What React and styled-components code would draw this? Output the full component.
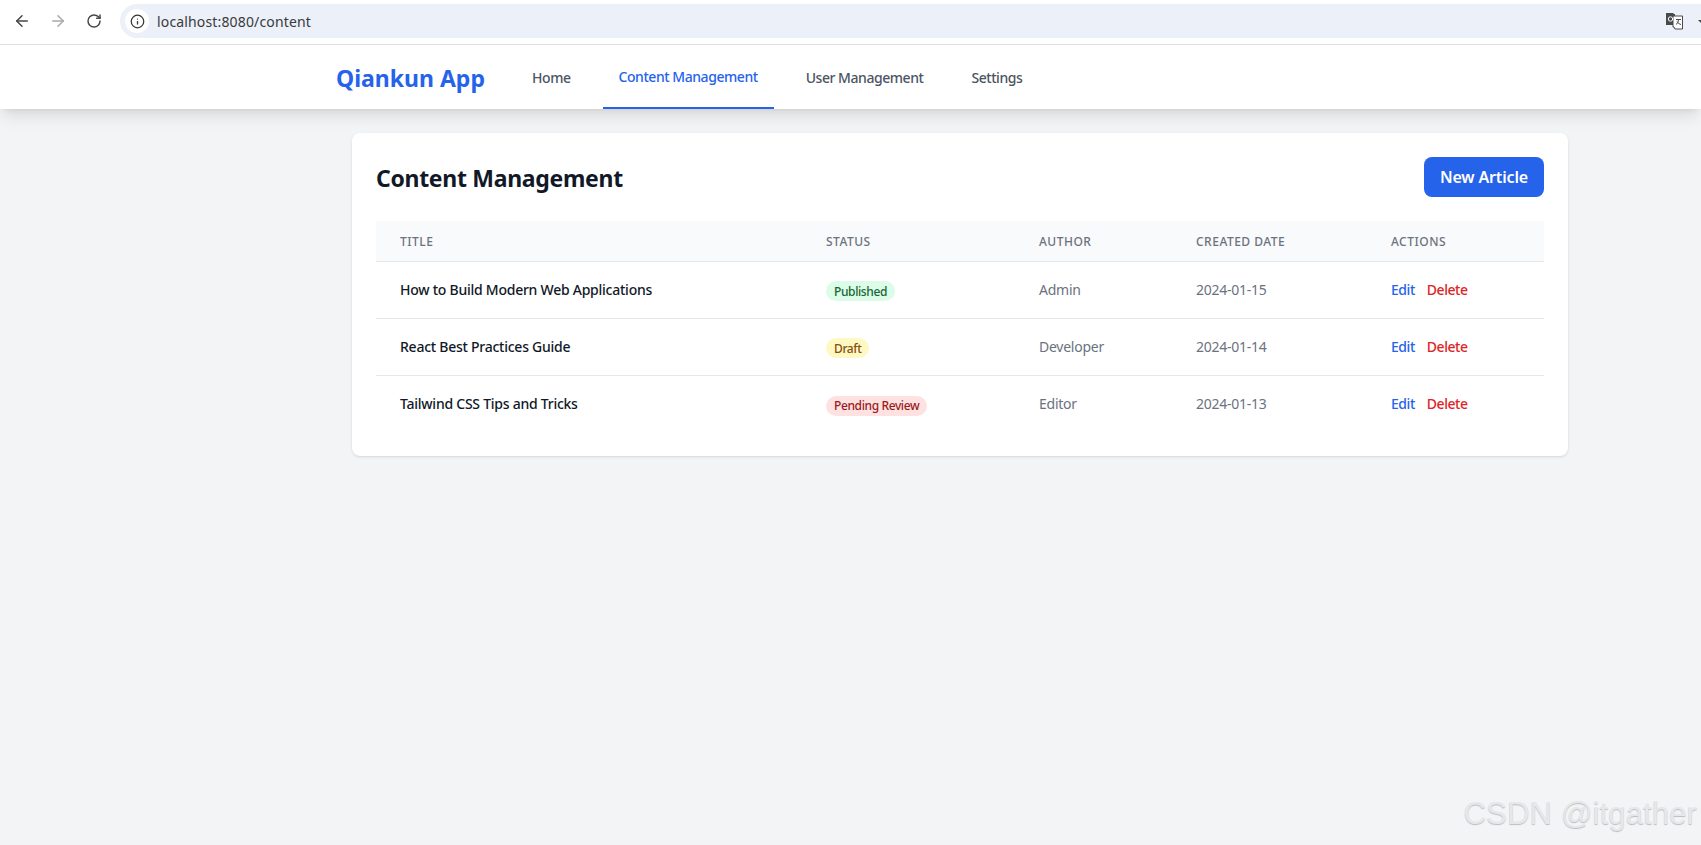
import React from 'react';
import styled, { createGlobalStyle } from 'styled-components';
import { ArrowLeft, ArrowRight, RotateCw, Info } from 'lucide-react';

const GlobalStyle = createGlobalStyle`
  html, body {
    margin: 0;
    padding: 0;
    height: 100%;
    background: #f3f4f6;
    font-family: "Noto Sans", "Open Sans", sans-serif;
    overflow: hidden;
  }
  * { box-sizing: border-box; }
`;

const Page = styled.div`
  position: relative;
  width: 1701px;
  height: 845px;
  overflow: hidden;
`;

// browser chrome
const BrowserBar = styled.div`
  height: 45px;
  background: #ffffff;
  border-bottom: 1px solid #e0e0e0;
  display: flex;
  align-items: center;
  padding: 0 0 2px 4px;
`;

const ChromeButton = styled.div`
  width: 36px;
  height: 36px;
  display: flex;
  align-items: center;
  justify-content: center;
  color: ${props => (props.$disabled ? '#a9a9a9' : '#474747')};
`;

const AddressBar = styled.div`
  flex: 1;
  height: 34px;
  margin-left: 8px;
  background: #ebf0f9;
  border-radius: 17px 0 0 17px;
  display: flex;
  align-items: center;
  padding-left: 5px;
`;

const SiteInfo = styled.div`
  width: 24px;
  height: 24px;
  border-radius: 50%;
  background: #ffffff;
  display: flex;
  align-items: center;
  justify-content: center;
  color: #333333;
`;

const Url = styled.span`
  margin-left: 8px;
  font-size: 14px;
  letter-spacing: 0.15px;
  color: #3a3a3a;
`;

const TranslateIcon = styled.svg`
  margin-left: auto;
  width: 17px;
  height: 18px;
`;

const Caret = styled.span`
  width: 0;
  height: 0;
  margin-right: -3px;
  margin-left: 15px;
  border-left: 3px solid transparent;
  border-right: 3px solid transparent;
  border-top: 3px solid #444444;
`;

// app nav
const Nav = styled.nav`
  position: relative;
  height: 64px;
  background: #ffffff;
  box-shadow: 0 10px 15px -3px rgba(0, 0, 0, 0.1), 0 4px 6px -4px rgba(0, 0, 0, 0.1);
  display: flex;
  align-items: stretch;
  padding-left: 336px;
`;

const Logo = styled.div`
  display: flex;
  align-items: center;
  width: 149px;
  font-size: 23px;
  font-weight: 700;
  color: #2563eb;
  margin-right: 31px;
  padding-top: 2px;
`;

const NavLinks = styled.div`
  display: flex;
  gap: 16px;
`;

const NavLink = styled.a`
  display: flex;
  align-items: center;
  padding: 0 16px;
  font-size: 14px;
  font-weight: 500;
  letter-spacing: -0.45px;
  color: ${props => (props.$active ? '#2563eb' : '#4b5563')};
  border-bottom: ${props => (props.$active ? '2px solid #2563eb' : '0')};
`;

const Main = styled.main`
  padding: 24px 0 0 352px;
`;

const Card = styled.section`
  width: 1216px;
  height: 323px;
  padding: 24px;
  background: #ffffff;
  border-radius: 8px;
  box-shadow: 0 1px 3px 0 rgba(0, 0, 0, 0.1), 0 1px 2px -1px rgba(0, 0, 0, 0.1);
`;

const CardHeader = styled.div`
  display: flex;
  align-items: center;
  justify-content: space-between;
  margin-bottom: 24px;
`;

const Heading = styled.h1`
  margin: 0;
  padding-top: 2px;
  font-size: 23px;
  font-weight: 700;
  letter-spacing: -0.3px;
  color: #111827;
`;

const PrimaryButton = styled.button`
  width: 120px;
  height: 40px;
  border: 0;
  border-radius: 8px;
  background: #2563eb;
  color: #ffffff;
  font: 600 16px "Noto Sans", sans-serif;
  letter-spacing: -0.15px;
`;

const Table = styled.table`
  width: 1168px;
  table-layout: fixed;
  border-collapse: collapse;
`;

const Th = styled.th`
  width: ${props => props.$width}px;
  height: 40px;
  padding: 1px 24px 0;
  background: #f9fafb;
  border-bottom: 1px solid #e5e7eb;
  text-align: left;
  font-size: 12px;
  font-weight: 500;
  letter-spacing: 0.5px;
  text-transform: uppercase;
  color: #6b7280;
`;

const Row = styled.tr`
  height: 57px;
  border-bottom: ${props => (props.$last ? '0' : '1px solid #e5e7eb')};
`;

const Td = styled.td`
  padding: 0 24px 1px;
  font-size: 14px;
  letter-spacing: -0.25px;
  color: #6b7280;
`;

const TitleCell = styled(Td)`
  font-weight: 500;
  color: #111827;
`;

const badgeColors = {
  Published: ['#dcfce7', '#166534'],
  Draft: ['#fef9c3', '#854d0e'],
  'Pending Review': ['#fee2e2', '#991b1b'],
};

const Badge = styled.span`
  display: inline-flex;
  align-items: center;
  height: 20px;
  padding: 0 8px;
  border-radius: 10px;
  font-size: 12px;
  font-weight: 500;
  letter-spacing: -0.38px;
  position: relative;
  top: 2px;
  background: ${props => badgeColors[props.$status][0]};
  color: ${props => badgeColors[props.$status][1]};
`;

const ActionLink = styled.a`
  font-size: 14px;
  font-weight: 500;
  letter-spacing: -0.45px;
  color: ${props => (props.$danger ? '#dc2626' : '#2563eb')};
  margin-right: 12px;
`;

const Watermark = styled.div`
  position: absolute;
  right: 4px;
  bottom: 13px;
  font-family: "Liberation Sans", Arial, sans-serif;
  font-size: 31.3px;
  color: #e6e7ea;
  text-shadow: 0 1px 1px #bdbdbd;
`;

const articles = [
  { title: 'How to Build Modern Web Applications', status: 'Published', author: 'Admin', date: '2024-01-15' },
  { title: 'React Best Practices Guide', status: 'Draft', author: 'Developer', date: '2024-01-14' },
  { title: 'Tailwind CSS Tips and Tricks', status: 'Pending Review', author: 'Editor', date: '2024-01-13' },
];

const App = () => (
  <Page>
    <GlobalStyle />
    <BrowserBar>
      <ChromeButton><ArrowLeft size={18} strokeWidth={2} /></ChromeButton>
      <ChromeButton $disabled><ArrowRight size={18} strokeWidth={2} /></ChromeButton>
      <ChromeButton><RotateCw size={16} strokeWidth={2.2} /></ChromeButton>
      <AddressBar>
        <SiteInfo><Info size={15} strokeWidth={2} /></SiteInfo>
        <Url>localhost:8080/content</Url>
        <TranslateIcon viewBox="0 0 17 18">
          <path d="M0 1h7l1 1h1v11H0z" fill="#4a4a4a" />
          <path d="M7 4h9.500v13H9l-1-2H7z" fill="#ffffff" stroke="#4a4a4a" strokeWidth="1" />
          <circle cx="4.500" cy="7" r="2.200" fill="none" stroke="#ffffff" strokeWidth="1" />
          <path d="M10 7.500h5M12.500 7.500c0 2.500-1.500 4.500-2.500 5M11 9.500c1 1.500 2.500 2.700 4 3" fill="none" stroke="#4a4a4a" strokeWidth="1" />
        </TranslateIcon>
        <Caret />
      </AddressBar>
    </BrowserBar>

    <Nav>
      <Logo>Qiankun App</Logo>
      <NavLinks>
        <NavLink>Home</NavLink>
        <NavLink $active>Content Management</NavLink>
        <NavLink>User Management</NavLink>
        <NavLink>Settings</NavLink>
      </NavLinks>
    </Nav>

    <Main>
      <Card>
        <CardHeader>
          <Heading>Content Management</Heading>
          <PrimaryButton>New Article</PrimaryButton>
        </CardHeader>
        <Table>
          <thead>
            <tr>
              <Th $width={426}>Title</Th>
              <Th $width={213}>Status</Th>
              <Th $width={157}>Author</Th>
              <Th $width={195}>Created Date</Th>
              <Th $width={177}>Actions</Th>
            </tr>
          </thead>
          <tbody>
            {articles.map((article, index) => (
              <Row key={article.title} $last={index === articles.length - 1}>
                <TitleCell>{article.title}</TitleCell>
                <Td><Badge $status={article.status}>{article.status}</Badge></Td>
                <Td>{article.author}</Td>
                <Td>{article.date}</Td>
                <Td>
                  <ActionLink>Edit</ActionLink>
                  <ActionLink $danger>Delete</ActionLink>
                </Td>
              </Row>
            ))}
          </tbody>
        </Table>
      </Card>
    </Main>

    <Watermark>CSDN @itgather</Watermark>
  </Page>
);

export default App;
